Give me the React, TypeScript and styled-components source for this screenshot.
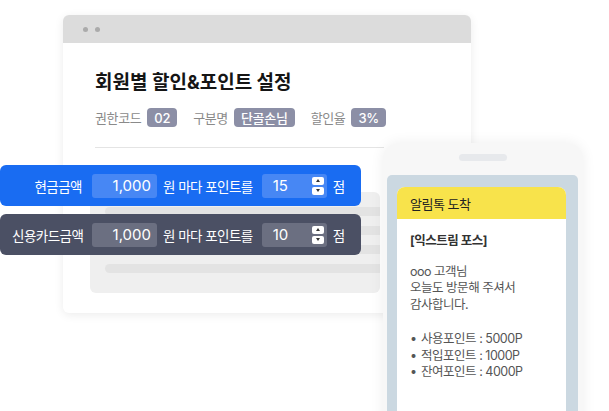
import styled, { createGlobalStyle } from "styled-components";

const GlobalStyle = createGlobalStyle`
  html, body {
    margin: 0;
    padding: 0;
    background: #ffffff;
  }
  body {
    font-family: Inter, "Noto Sans CJK KR", sans-serif;
    color: #222;
  }
`;

const Canvas = styled.div`
  position: relative;
  width: 609px;
  height: 411px;
  overflow: hidden;
  background: #fff;
`;

const BrowserWindow = styled.div`
  position: absolute;
  left: 63px;
  top: 15px;
  width: 408px;
  height: 298px;
  display: flex;
  flex-direction: column;
  background: #fff;
  border-radius: 6px;
  box-shadow: 0 2px 10px rgba(0, 0, 0, 0.08);
  overflow: hidden;
`;

const TitleBar = styled.div`
  height: 28px;
  flex-shrink: 0;
  display: flex;
  align-items: center;
  gap: 7px;
  padding-left: 20px;
  background: #dcdcdc;
`;

const Dot = styled.span`
  width: 5px;
  height: 5px;
  border-radius: 50%;
  background: #ababab;
`;

const WindowBody = styled.div`
  display: flex;
  flex-direction: column;
  padding: 28px 87px 20px 32px;
`;

const Heading = styled.h1`
  margin: 0;
  font-size: 19px;
  line-height: 24px;
  font-weight: 700;
  letter-spacing: 0;
  color: #151515;
`;

const MetaRow = styled.div`
  display: flex;
  align-items: center;
  gap: 16px;
  margin-top: 13px;
  white-space: nowrap;
`;

const MetaItem = styled.div`
  flex-shrink: 0;
  display: flex;
  align-items: center;
  gap: 6px;
`;

const MetaLabel = styled.span`
  font-size: 13px;
  letter-spacing: -0.03em;
  color: #8a8a8a;
`;

const Badge = styled.span`
  height: 19px;
  padding: 0 7px;
  display: inline-flex;
  align-items: center;
  border-radius: 4px;
  background: #8c8fa6;
  color: #fff;
  font-size: 13px;
  font-weight: 500;
  letter-spacing: -0.02em;
`;

const Divider = styled.hr`
  margin: 20px 0 0;
  border: 0;
  border-top: 1px solid #e4e4e4;
`;

const Placeholder = styled.div`
  width: 290px;
  height: 101px;
  box-sizing: border-box;
  margin: 44px 0 0 -5px;
  padding: 15px 0 0 15px;
  display: flex;
  flex-direction: column;
  gap: 10px;
  border-radius: 6px;
  background: #efefef;
`;

const PlaceholderBar = styled.div`
  height: 9px;
  border-radius: 5px 0 0 5px;
  background: #e3e3e3;
`;

const RuleList = styled.div`
  position: absolute;
  left: 0;
  top: 165px;
  display: flex;
  flex-direction: column;
  gap: 8px;
`;

const tones = {
  blue: { row: "#196cf2", field: "#4787f4" },
  dark: { row: "#4b5064", field: "#6b6f81" },
};

type Tone = keyof typeof tones;

const RuleRow = styled.div<{ $tone: Tone }>`
  width: 361px;
  height: 41px;
  box-sizing: border-box;
  padding: 0 12px;
  display: flex;
  align-items: center;
  border-radius: 6px;
  background: ${({ $tone }) => tones[$tone].row};
  color: #fff;
  font-size: 13.5px;
  letter-spacing: -0.04em;
  white-space: nowrap;

  --field: ${({ $tone }) => tones[$tone].field};
`;

const RuleLabel = styled.span`
  width: 70px;
  text-align: right;
  margin-right: 10px;
`;

const Field = styled.div`
  width: 65px;
  height: 24px;
  flex-shrink: 0;
  box-sizing: border-box;
  display: flex;
  align-items: center;
  border-radius: 3px;
  background: var(--field);
  font-size: 15px;
  letter-spacing: 0;
`;

const AmountField = styled(Field)`
  justify-content: flex-end;
  padding-right: 6px;
`;

const SpinField = styled(Field)`
  justify-content: space-between;
  padding: 0 3px 0 11px;
`;

const Spinner = styled.div`
  display: flex;
  flex-direction: column;
  gap: 2px;
`;

const SpinButton = styled.span<{ $down?: boolean }>`
  width: 12px;
  height: 8px;
  display: flex;
  align-items: center;
  justify-content: center;
  border-radius: 2px;
  background: #fff;

  &::after {
    content: "";
    border-left: 2.5px solid transparent;
    border-right: 2.5px solid transparent;
    ${({ $down }) =>
      $down ? "border-top: 3px solid #333;" : "border-bottom: 3px solid #333;"}
  }
`;

const RuleText = styled.span`
  margin: 0 9px 0 6px;
`;

const Unit = styled.span`
  margin-left: 6px;
`;

const Phone = styled.div`
  position: absolute;
  left: 383px;
  top: 143px;
  width: 200px;
  height: 300px;
  box-sizing: border-box;
  padding: 11px 5px 0 4px;
  display: flex;
  flex-direction: column;
  align-items: center;
  border-radius: 16px;
  background: #f7f7f7;
  box-shadow: 0 0 14px rgba(0, 0, 0, 0.07);
`;

const Speaker = styled.div`
  width: 48px;
  height: 7px;
  border-radius: 4px;
  background: #e7e9ec;
`;

const Screen = styled.div`
  align-self: stretch;
  flex: 1;
  margin-top: 14px;
  padding: 12px 12px 0 10px;
  border-radius: 5px 5px 0 0;
  background: #cbd8e1;
`;

const Message = styled.div`
  height: 100%;
  border-radius: 8px 8px 0 0;
  overflow: hidden;
  background: #fff;
  letter-spacing: -0.03em;
`;

const MessageHeader = styled.div`
  height: 32px;
  padding-left: 13px;
  display: flex;
  align-items: center;
  background: #f8e34b;
  font-size: 13px;
  color: #222;
`;

const MessageBody = styled.div`
  padding: 14px 13px;
  font-size: 12.5px;
  line-height: 16.5px;
  color: #555;
`;

const Sender = styled.p`
  margin: 0 0 14px;
  font-weight: 700;
  color: #333;
`;

const Paragraph = styled.p`
  margin: 0 0 18px;
`;

const PointList = styled.ul`
  margin: 0;
  padding: 0;
  list-style: none;
`;

const PointItem = styled.li`
  display: flex;
  gap: 6px;

  &::before {
    content: "•";
    width: 5px;
  }
`;

type Rule = { tone: Tone; label: string; amount: string; points: string };

const rules: Rule[] = [
  { tone: "blue", label: "현금금액", amount: "1,000", points: "15" },
  { tone: "dark", label: "신용카드금액", amount: "1,000", points: "10" },
];

const meta = [
  { label: "권한코드", value: "02" },
  { label: "구분명", value: "단골손님" },
  { label: "할인율", value: "3%" },
];

const pointLines = ["사용포인트 : 5000P", "적입포인트 : 1000P", "잔여포인트 : 4000P"];

export default function App() {
  return (
    <>
      <GlobalStyle />
      <Canvas>
        <BrowserWindow>
          <TitleBar>
            <Dot />
            <Dot />
          </TitleBar>
          <WindowBody>
            <Heading>회원별 할인&포인트 설정</Heading>
            <MetaRow>
              {meta.map((m) => (
                <MetaItem key={m.label}>
                  <MetaLabel>{m.label}</MetaLabel>
                  <Badge>{m.value}</Badge>
                </MetaItem>
              ))}
            </MetaRow>
            <Divider />
            <Placeholder>
              <PlaceholderBar />
              <PlaceholderBar />
              <PlaceholderBar />
              <PlaceholderBar />
            </Placeholder>
          </WindowBody>
        </BrowserWindow>

        <RuleList>
          {rules.map((r) => (
            <RuleRow key={r.label} $tone={r.tone}>
              <RuleLabel>{r.label}</RuleLabel>
              <AmountField>{r.amount}</AmountField>
              <RuleText>원 마다 포인트를</RuleText>
              <SpinField>
                {r.points}
                <Spinner>
                  <SpinButton />
                  <SpinButton $down />
                </Spinner>
              </SpinField>
              <Unit>점</Unit>
            </RuleRow>
          ))}
        </RuleList>

        <Phone>
          <Speaker />
          <Screen>
            <Message>
              <MessageHeader>알림톡 도착</MessageHeader>
              <MessageBody>
                <Sender>[익스트림 포스]</Sender>
                <Paragraph>
                  ooo 고객님
                  <br />
                  오늘도 방문해 주셔서
                  <br />
                  감사합니다.
                </Paragraph>
                <PointList>
                  {pointLines.map((p) => (
                    <PointItem key={p}>{p}</PointItem>
                  ))}
                </PointList>
              </MessageBody>
            </Message>
          </Screen>
        </Phone>
      </Canvas>
    </>
  );
}
